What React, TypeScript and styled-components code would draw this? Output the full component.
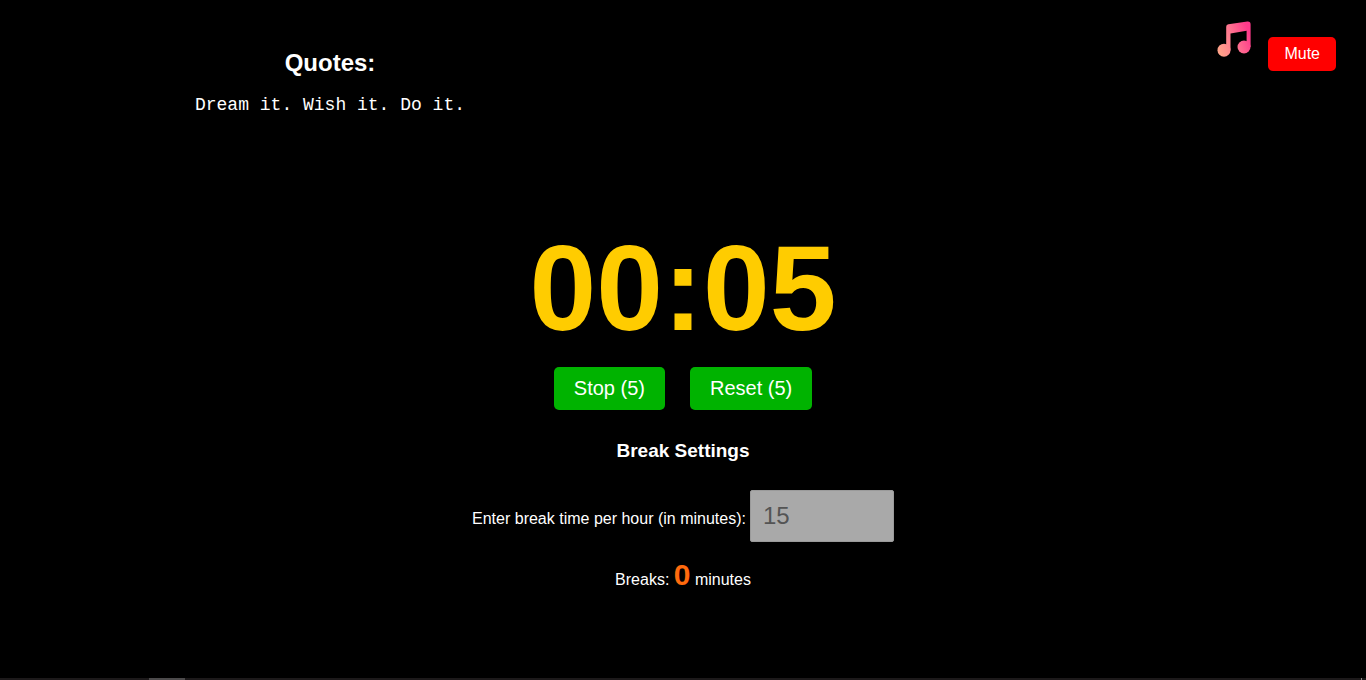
import React, { useState } from "react";
import styled, { createGlobalStyle } from "styled-components";

const GlobalStyle = createGlobalStyle`
  * {
    box-sizing: border-box;
  }
  body {
    margin: 0;
    background: #000;
    color: #fff;
    font-family: Arial, "Liberation Sans", sans-serif;
    font-size: 16px;
  }
`;

const Page = styled.div`
  display: flex;
  flex-direction: column;
  min-height: 100vh;
`;

const Header = styled.header`
  display: grid;
  grid-template-columns: 1fr 1fr;
  column-gap: 16px;
  padding-right: 30px;
`;

const Quotes = styled.section`
  padding-top: 49px;
  text-align: center;
`;

const QuotesTitle = styled.h2`
  margin: 0;
  font-size: 24px;
  line-height: 28px;
`;

const Quote = styled.p`
  margin: 18px 0 0;
  font-family: "Courier New", "Liberation Mono", monospace;
  font-size: 18px;
  line-height: 20px;
`;

const SoundControls = styled.div`
  display: flex;
  align-items: flex-start;
  justify-content: flex-end;
  gap: 16px;
  padding-top: 21px;
`;

const MusicIcon = styled.svg`
  width: 36px;
  height: 36px;
`;

const Button = styled.button`
  border: 0;
  border-radius: 5px;
  color: #fff;
  font-family: inherit;
  cursor: pointer;
`;

const MuteButton = styled(Button)`
  margin-top: 16px;
  padding: 8px 16px;
  background: #f00;
  font-size: 16px;
  line-height: 18px;
`;

const TimerButton = styled(Button)`
  padding: 10px 20px;
  background: #00b300;
  font-size: 20px;
  line-height: 23px;
`;

const Main = styled.main`
  display: flex;
  flex: 1;
  flex-direction: column;
  align-items: center;
  padding-top: 104px;
`;

const Clock = styled.div`
  color: #fc0;
  font-size: 120px;
  font-weight: bold;
  line-height: 138px;
`;

const ButtonRow = styled.div`
  display: flex;
  gap: 25px;
  margin-top: 10px;
`;

const SettingsTitle = styled.h3`
  margin: 30px 0 0;
  font-size: 19px;
  line-height: 22px;
`;

const Field = styled.div`
  display: flex;
  align-items: baseline;
  gap: 4px;
  margin-top: 28px;
`;

const MinutesInput = styled.input`
  width: 144px;
  height: 52px;
  padding: 12px;
  border: 1px solid #9a9a9a;
  border-radius: 2px;
  background: #a9a9a9;
  color: #545454;
  font-family: inherit;
  font-size: 24px;

  &::placeholder {
    color: #545454;
    opacity: 1;
  }
`;

const BreakTotal = styled.p`
  margin: 16px 0 0;
  line-height: 34px;
`;

const BreakCount = styled.span`
  color: #ff6a0d;
  font-size: 30px;
  font-weight: bold;
`;

const BottomBar = styled.footer`
  display: flex;
  justify-content: space-between;
  height: 2px;
  padding: 0 4px 0 149px;
  background: #1c191a;
`;

const ActiveMark = styled.span`
  width: 36px;
  background: #4c4a4b;
`;

const EndMark = styled.span`
  width: 1px;
  background: #8a8889;
`;

export default function App() {
  const [breakTime, setBreakTime] = useState("");
  const [muted, setMuted] = useState(false);

  return (
    <>
      <GlobalStyle />
      <Page>
        <Header>
          <Quotes>
            <QuotesTitle>Quotes:</QuotesTitle>
            <Quote>Dream it. Wish it. Do it.</Quote>
          </Quotes>
          <SoundControls>
            <MusicIcon viewBox="0 0 36 36" aria-hidden="true">
              <defs>
                <linearGradient id="note" x1="2" y1="26" x2="34" y2="14" gradientUnits="userSpaceOnUse">
                  <stop offset="0" stopColor="#ffa289" />
                  <stop offset="0.5" stopColor="#ff7590" />
                  <stop offset="1" stopColor="#ff3a8b" />
                </linearGradient>
              </defs>
              <g fill="url(#note)">
                <circle cx="8" cy="29.2" r="6.5" />
                <circle cx="28" cy="26" r="6.5" />
                <path d="M12.4 3.2 31.4.6Q34.6.4 34.6 3.4V26H30.6V9.8L14.5 12.5V29.2H10.2V5.8Q10.2 3.6 12.4 3.2Z" />
              </g>
            </MusicIcon>
            <MuteButton type="button" aria-pressed={muted} onClick={() => setMuted(!muted)}>
              Mute
            </MuteButton>
          </SoundControls>
        </Header>
        <Main>
          <Clock role="timer">00:05</Clock>
          <ButtonRow>
            <TimerButton type="button">Stop (5)</TimerButton>
            <TimerButton type="button">Reset (5)</TimerButton>
          </ButtonRow>
          <SettingsTitle>Break Settings</SettingsTitle>
          <Field>
            <label htmlFor="break-time">Enter break time per hour (in minutes):</label>
            <MinutesInput
              id="break-time"
              type="text"
              inputMode="numeric"
              placeholder="15"
              value={breakTime}
              onChange={(event) => setBreakTime(event.target.value)}
            />
          </Field>
          <BreakTotal>
            Breaks: <BreakCount>0</BreakCount> minutes
          </BreakTotal>
        </Main>
        <BottomBar>
          <ActiveMark />
          <EndMark />
        </BottomBar>
      </Page>
    </>
  );
}
